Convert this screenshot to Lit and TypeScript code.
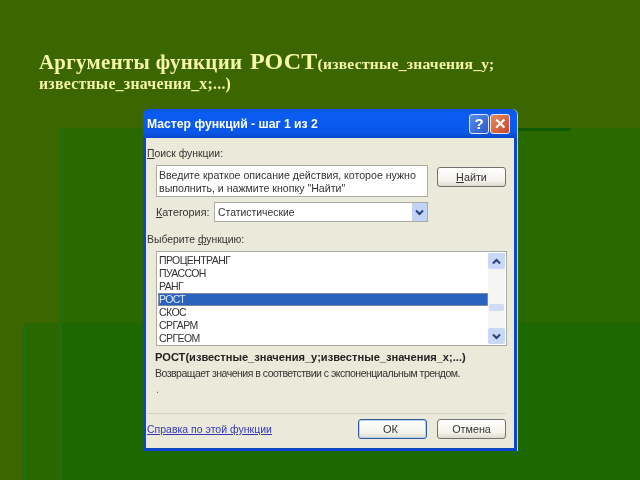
import { LitElement, html, css } from "lit";
import { customElement } from "lit/decorators.js";

const items = ["ПРОЦЕНТРАНГ", "ПУАССОН", "РАНГ", "РОСТ", "СКОС", "СРГАРМ", "СРГЕОМ"];

@customElement("app-root")
export class AppRoot extends LitElement {
  static styles = css`
    :host {
      display: block;
      width: 640px;
      height: 480px;
      overflow: hidden;
      background-color: #3c6600;
      background-repeat: no-repeat;
      background-image:
        linear-gradient(#0f5a05, #0f5a05),
        linear-gradient(#1f6e14, #1f6e14),
        linear-gradient(#1f6c14, #1f6c14),
        linear-gradient(#1d6800, #1d6800),
        linear-gradient(#296800, #296800),
        linear-gradient(#2a6800, #2a6800);
      background-size:
        54px 3px,
        3px 352px,
        3px 157px,
        580px 157px,
        36px 157px,
        580px 195px;
      background-position:
        517px 128px,
        59px 128px,
        23px 323px,
        60px 323px,
        24px 323px,
        60px 128px;
    }
    .title {
      padding: 47px 0 0 39px;
      height: 62px;
      font-family: "Liberation Serif", serif;
      font-weight: bold;
      color: #f4f6aa;
      filter: blur(0.35px);
    }
    .l1 { font-size: 20.8px; line-height: 28px; white-space: nowrap; height: 28px; letter-spacing: 0.35px; }
    .big { font-size: 24px; letter-spacing: 0.2px; margin-left: 2px; }
    .sm { font-size: 15.6px; letter-spacing: 0.25px; }
    .l2 { font-size: 15.8px; line-height: 18px; letter-spacing: 0.25px; white-space: nowrap; }
    .dialog {
      margin: 0 0 0 143px;
      width: 374px;
      height: 342px;
      box-sizing: border-box;
      border-radius: 6px 6px 0 0;
      background: #0f45c8;
      display: flex;
      flex-direction: column;
      font-family: "Liberation Sans", sans-serif;
      font-size: 10.4px;
      color: #333;
      filter: blur(0.45px);
      box-shadow: 1px 0 0 #b9d0ea;
    }
    .bar {
      height: 29px;
      flex: none;
      display: flex;
      align-items: center;
      padding: 0 7px 0 4px;
      border-radius: 6px 6px 0 0;
      background: linear-gradient(#0d55e0, #0a5cf2 20%, #0a57e8 80%, #0a48c8);
      color: #fff;
      font-size: 12.2px;
      font-weight: bold;
    }
    .bar .t { flex: 1; white-space: nowrap; }
    .cap {
      width: 20px; height: 20px; border-radius: 3px; border: 1px solid #dfe8fa;
      box-sizing: border-box; margin-left: 1px;
      display: flex; align-items: center; justify-content: center;
      font-size: 15px; font-weight: bold; color: #fff;
    }
    .help { background: linear-gradient(135deg, #5a8cec, #2a58c8); }
    .close { background: linear-gradient(135deg, #e88a5e, #c8452a); }
    .body {
      flex: 1;
      margin: 0 3px 3px 3px;
      background: #ebe9da;
      padding: 0 8px 0 1px;
      display: flex;
      flex-direction: column;
      min-height: 0;
    }
    .label { height: 13px; line-height: 13px; white-space: nowrap; }
    u { text-underline-offset: 1px; }
    .search { margin-top: 9px; }
    .row { display: flex; align-items: flex-start; }
    .box {
      background: #fff; border: 1px solid #a9aca4; box-sizing: border-box;
    }
    .desc {
      margin: 5px 0 0 9px; width: 272px; height: 32px; font-size: 10.6px;
      padding: 3px 0 0 2px; line-height: 12.5px; white-space: nowrap; color: #333;
    }
    .btn {
      width: 69px; height: 20px; box-sizing: border-box;
      border: 1px solid #6e7370; border-radius: 3px;
      background: linear-gradient(#fff, #f4f3ec 70%, #dcd9cc);
      display: flex; align-items: center; justify-content: center;
      color: #333; font-size: 10.8px;
    }
    .find { margin: 7px 0 0 9px; }
    .cat { margin-top: 5px; height: 20px; align-items: center; }
    .cat .label { margin-left: 9px; width: 58px; font-size: 10.8px; }
    .combo {
      width: 214px; height: 20px; display: flex; align-items: center;
      padding-left: 3px; justify-content: space-between;
    }
    .drop {
      width: 15px; height: 18px; background: #c3d3f6; display: flex;
      align-items: center; justify-content: center;
    }
    .choose { margin-top: 11px; }
    .list {
      margin: 5px 0 0 9px; width: 351px; height: 95px;
      display: flex; padding: 1px;
    }
    .rows { flex: 1; padding-top: 1px; }
    .item { height: 13px; line-height: 13px; padding-left: 1px; color: #333; font-size: 10.5px; letter-spacing: -0.6px; }
    .item.sel { background: #2a62bd; color: #dfe8f8; border: 1px solid #7a8aa0; box-sizing: border-box; line-height: 11px; padding-left: 0; }
    .scroll { width: 17px; display: flex; flex-direction: column; justify-content: space-between; background: #f5f6f4; position: relative; }
    .sb { height: 16px; background: #c9d8f6; display: flex; align-items: center; justify-content: center; border-radius: 2px; }
    .thumb { position: absolute; left: 1px; right: 1px; top: 51px; height: 7px; background: #d0dbf6; border-radius: 2px; }
    .sig { margin: 5px 0 0 8px; font-weight: bold; font-size: 11.1px; line-height: 13px; white-space: nowrap; color: #222; }
    .info { margin: 3px 0 0 8px; font-size: 10.5px; letter-spacing: -0.5px; line-height: 13px; white-space: nowrap; color: #333; }
    .dot { margin: 3px 0 0 9px; line-height: 13px; color: #666; }
    .sep { margin: 17px 0 0 0; height: 1px; background: #d5d3c4; }
    .foot { margin-top: 5px; display: flex; align-items: center; }
    .link { color: #3338b8; text-decoration: underline; flex: 1; white-space: nowrap; font-size: 10.5px; }
    .ok { border-color: #2f5c9e; box-shadow: inset 0 0 0 1px #b8d0f0; margin-right: 10px; padding-right: 4px; font-size: 11px; }
  `;

  render() {
    const chev = (up: boolean) => html`<svg width="9" height="7" viewBox="0 0 9 7"><path d=${up ? "M1 5.5L4.5 2L8 5.5" : "M1 1.5L4.5 5L8 1.5"} fill="none" stroke="#25437e" stroke-width="2"/></svg>`;
    return html`
      <div class="title">
        <div class="l1">Аргументы функции <span class="big">РОСТ</span><span class="sm">(известные_значения_у;</span></div>
        <div class="l2">известные_значения_х;...)</div>
      </div>
      <div class="dialog">
        <div class="bar">
          <span class="t">Мастер функций - шаг 1 из 2</span>
          <span class="cap help">?</span>
          <span class="cap close">✕</span>
        </div>
        <div class="body">
          <div class="label search"><u>П</u>оиск функции:</div>
          <div class="row">
            <div class="box desc">Введите краткое описание действия, которое нужно<br />выполнить, и нажмите кнопку "Найти"</div>
            <div class="btn find"><span><u>Н</u>айти</span></div>
          </div>
          <div class="row cat">
            <div class="label"><u>К</u>атегория:</div>
            <div class="box combo"><span>Статистические</span><span class="drop">${chev(false)}</span></div>
          </div>
          <div class="label choose">Выберите <u>ф</u>ункцию:</div>
          <div class="box list">
            <div class="rows">
              ${items.map((i) => html`<div class="item ${i === "РОСТ" ? "sel" : ""}">${i}</div>`)}
            </div>
            <div class="scroll">
              <div class="sb">${chev(true)}</div>
              <div class="thumb"></div>
              <div class="sb">${chev(false)}</div>
            </div>
          </div>
          <div class="sig">РОСТ(известные_значения_у;известные_значения_х;...)</div>
          <div class="info">Возвращает значения в соответствии с экспоненциальным трендом.</div>
          <div class="dot">.</div>
          <div class="sep"></div>
          <div class="foot">
            <span class="link">Справка по этой функции</span>
            <div class="btn ok">ОК</div>
            <div class="btn">Отмена</div>
          </div>
        </div>
      </div>
    `;
  }
}
